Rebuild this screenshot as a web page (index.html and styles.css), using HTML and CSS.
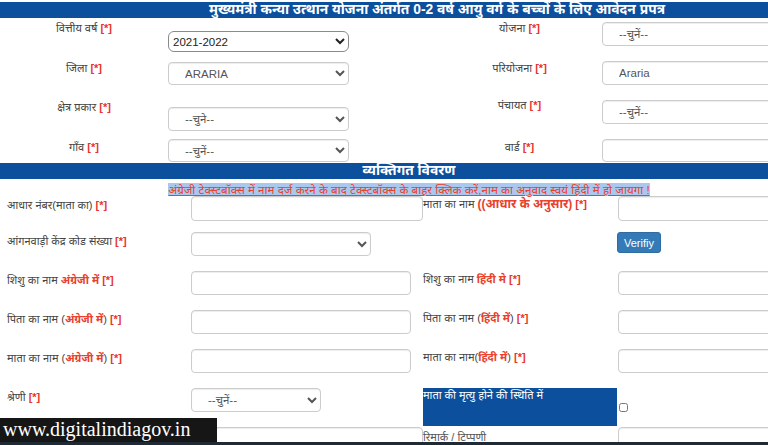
FILE: index.html
```html
<!DOCTYPE html>
<html lang="hi">
<head>
  <meta charset="UTF-8">
  <meta name="viewport" content="width=device-width, initial-scale=1.0">
  <title>आवेदन प्रपत्र</title>
  <link rel="stylesheet" href="styles.css">
</head>
<body>
  <div class="page">
    <div class="bar bar-main">मुख्यमंत्री कन्या उत्थान योजना अंतर्गत 0-2 वर्ष आयु वर्ग के बच्चों के लिए आवेदन प्रपत्र</div>

    <!-- Scheme details -->
    <div class="top-row r1">
      <label class="lbl">वित्तीय वर्ष <span class="req">[*]</span></label>
      <select class="native"><option>2021-2022</option></select>
      <span></span>
      <label class="lbl">योजना <span class="req">[*]</span></label>
      <select class="ctl"><option>--चुनें--</option></select>
    </div>
    <div class="top-row r2">
      <label class="lbl">जिला <span class="req">[*]</span></label>
      <select class="ctl"><option>ARARIA</option></select>
      <span></span>
      <label class="lbl">परियोजना <span class="req">[*]</span></label>
      <select class="ctl"><option>Araria</option></select>
    </div>
    <div class="top-row r3">
      <label class="lbl">क्षेत्र प्रकार <span class="req">[*]</span></label>
      <select class="ctl"><option>--चुने--</option></select>
      <span></span>
      <label class="lbl">पंचायत <span class="req">[*]</span></label>
      <select class="ctl"><option>--चुनें--</option></select>
    </div>
    <div class="top-row r4">
      <label class="lbl">गाँव <span class="req">[*]</span></label>
      <select class="ctl"><option>--चुनें--</option></select>
      <span></span>
      <label class="lbl">वार्ड <span class="req">[*]</span></label>
      <input class="ctl" type="text">
    </div>

    <div class="bar bar-sub">व्यक्तिगत विवरण</div>
    <p class="note"><a href="#">अंग्रेजी टेक्स्टबॉक्स में नाम दर्ज करने के बाद टेक्स्टबॉक्स के बाहर क्लिक करें,नाम का अनुवाद स्वयं हिंदी में हो जायगा !</a></p>

    <!-- Personal details -->
    <div class="row ra">
      <label class="lbl">आधार नंबर(माता का) <span class="req">[*]</span></label>
      <input class="ctl w-232" type="text">
      <label class="lbl">माता का नाम <span class="hi big">((आधार के अनुसार)</span> <span class="req">[*]</span></label>
      <input class="ctl" type="text">
    </div>
    <div class="row">
      <label class="lbl">आंगनवाड़ी केंद्र कोड संख्या <span class="req">[*]</span></label>
      <select class="ctl w-180"><option></option></select>
      <span></span>
      <button class="btn" type="button">Verifiy</button>
    </div>
    <div class="row">
      <label class="lbl">शिशु का नाम <span class="hi">अंग्रेजी में</span> <span class="req">[*]</span></label>
      <input class="ctl w-220" type="text">
      <label class="lbl">शिशु का नाम <span class="hi">हिंदी मे</span> <span class="req">[*]</span></label>
      <input class="ctl" type="text">
    </div>
    <div class="row">
      <label class="lbl">पिता का नाम (<span class="hi">अंग्रेजी में</span>) <span class="req">[*]</span></label>
      <input class="ctl w-220" type="text">
      <label class="lbl">पिता का नाम (<span class="hi">हिंदी में</span>) <span class="req">[*]</span></label>
      <input class="ctl" type="text">
    </div>
    <div class="row">
      <label class="lbl">माता का नाम (<span class="hi">अंग्रेजी में</span>) <span class="req">[*]</span></label>
      <input class="ctl w-220" type="text">
      <label class="lbl">माता का नाम(<span class="hi">हिंदी में</span>) <span class="req">[*]</span></label>
      <input class="ctl" type="text">
    </div>
    <div class="row">
      <label class="lbl">श्रेणी <span class="req">[*]</span></label>
      <select class="ctl w-130"><option>--चुनें--</option></select>
      <div class="death-box">माता की मृत्यु होने की स्थिति में</div>
      <div class="check-cell"><input type="checkbox"></div>
    </div>
    <div class="row rg">
      <label class="lbl"></label>
      <input class="ctl w-232" type="text">
      <label class="lbl remark">रिमार्क / टिप्पणी</label>
      <input class="ctl" type="text">
    </div>
  </div>

  <div class="watermark">www.digitalindiagov.in</div>
  <div class="taskbar"></div>
</body>
</html>
```

FILE: styles.css
```css
/* Base */
* {
  margin: 0;
  padding: 0;
  box-sizing: border-box;
}

body {
  font-family: 'Liberation Sans', 'Noto Sans', sans-serif;
  font-size: 11px;
  color: #333;
  background: #fff;
  overflow: hidden;
}

.page {
  width: 874px;
}

/* Blue title bars */
.bar {
  background: #0c4f9d;
  color: #fff;
  font-weight: bold;
  font-size: 13.8px;
  height: 16px;
  line-height: 16px;
  text-align: center;
}

.bar-main {
  margin-top: 2px;
}

.bar-sub {
  width: 818px;
}

.lbl {
  line-height: 16px;
  color: #444;
}

.req {
  color: #e8342a;
  font-weight: bold;
}

.hi {
  color: #e8412c;
  font-weight: bold;
}

.hi.big {
  font-size: 12px;
}

/* Form controls */
.ctl {
  display: block;
  width: 200px;
  height: 24px;
  border: 1px solid #ccc;
  border-radius: 4px;
  padding: 0 12px;
  font-family: 'Liberation Sans', 'Noto Sans', sans-serif;
  font-size: 11.5px;
  color: #555;
  background: #fff;
  box-shadow: inset 0 1px 1px rgba(0, 0, 0, 0.075);
}

.native {
  display: block;
  width: 181px;
  height: 21px;
  border: 1px solid #8a8a8a;
  border-radius: 6px;
  font-family: 'Liberation Sans', sans-serif;
  font-size: 11.5px;
  color: #222;
  background: #fff;
}

/* Top section rows */
.top-row {
  display: grid;
  grid-template-columns: 168px 181px 88px 165px 200px;
  align-items: start;
}

.top-row .lbl {
  text-align: center;
  padding-top: 2px;
}

.top-row .ctl:nth-child(2) {
  width: 181px;
}

.r1 { height: 40px; }
.r1 .native { margin-top: 13px; }
.r1 .ctl { margin-top: 4px; }

.r2 { height: 39px; }
.r2 .ctl:nth-child(2) { margin-top: 4px; height: 23px; }
.r2 .ctl:nth-child(5) { margin-top: 3px; }

.r3 { height: 39px; }
.r3 .ctl:nth-child(2) { margin-top: 10px; }
.r3 .lbl:nth-child(4) { padding-top: 0; }
.r3 .ctl:nth-child(5) { margin-top: 3px; }

.r4 { height: 27px; }
.r4 .lbl { padding-top: 3px; }
.r4 .ctl { margin-top: 3px; height: 23px; }

/* Translation note */
.note {
  width: 818px;
  text-align: center;
  height: 17px;
  padding-top: 4px;
  line-height: 13px;
}

.note a {
  color: #e8412c;
  background: #aac8ee;
  text-decoration: underline;
  font-size: 11.6px;
}

/* Personal detail rows */
.row {
  display: grid;
  grid-template-columns: 191px 232px 195px 200px;
  align-items: start;
  height: 39px;
}

.row > .lbl:first-child {
  padding-left: 7px;
  padding-top: 1px;
}

.row.ra {
  height: 36px;
}

.ra .ctl {
  height: 25px;
}

.w-232 { width: 232px; }
.w-220 { width: 220px; }
.w-180 { width: 180px; }
.w-130 { width: 130px; }

.btn {
  width: 44px;
  height: 21px;
  margin-left: -1px;
  background: #337ab7;
  border: 1px solid #2e6da4;
  border-radius: 3px;
  color: #fff;
  font-family: 'Liberation Sans', sans-serif;
  font-size: 11px;
}

.death-box {
  background: #0c4f9d;
  color: #fff;
  height: 38px;
  width: 194px;
  line-height: 14px;
}

.check-cell input {
  width: 9px;
  height: 9px;
  margin: 15px 0 0 1px;
}

.remark {
  color: #555;
  padding-top: 2px;
}

/* Screenshot overlays */
.watermark {
  position: absolute;
  left: 0;
  top: 418px;
  width: 217px;
  height: 24px;
  background: #161616;
  color: #fff;
  font-family: 'Liberation Serif', serif;
  font-size: 20px;
  line-height: 23px;
  padding-left: 3px;
}

.taskbar {
  position: absolute;
  left: 0;
  top: 442px;
  width: 100%;
  height: 3px;
  background: #1e2a36;
}
```
